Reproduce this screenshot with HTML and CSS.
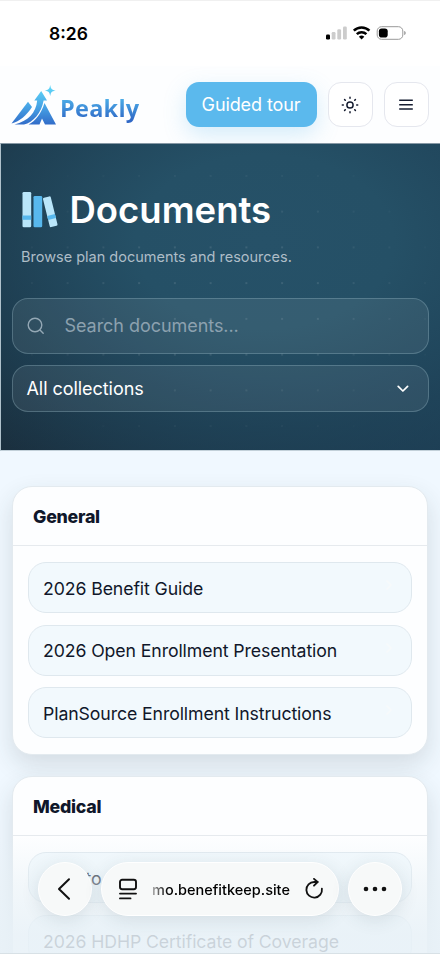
FILE: index.html
```
<!DOCTYPE html>
<html lang="en">
<head>
<meta charset="utf-8">
<meta name="viewport" content="width=device-width, initial-scale=1">
<title>Peakly Documents</title>
<link rel="stylesheet" href="styles.css">
</head>
<body>
<div class="screen">
  <div class="status">
    <span class="time">8:26</span>
    <svg class="status-icons" width="80" height="16" viewBox="0 0 80 16">
      <rect x="0" y="9.5" width="4" height="5" rx="1.2" fill="#000"/>
      <rect x="5.7" y="7" width="3.8" height="7.5" rx="1.2" fill="#ccc"/>
      <rect x="11.3" y="4.2" width="3.8" height="10.3" rx="1.2" fill="#ccc"/>
      <rect x="17" y="1.5" width="3.8" height="13" rx="1.2" fill="#ccc"/>
      <g fill="none" stroke="#000" stroke-width="2.5"><path d="M27.8 5.7a11 11 0 0 1 15.6 0"/><path d="M30.8 9.2a6.8 6.8 0 0 1 9.6 0"/></g>
      <path d="M32.9 11.7a3.9 3.9 0 0 1 5.4 0L35.6 14.5z" fill="#000"/>
      <rect x="51.2" y="1.7" width="25.6" height="12.6" rx="4.3" fill="none" stroke="#999"/>
      <rect x="52.9" y="3.4" width="8.8" height="9.2" rx="2.8" fill="#000"/>
      <path d="M78.2 6c2 .6 2 3.4 0 4z" fill="#999"/>
    </svg>
  </div>

  <header class="topbar">
    <div class="brand">
      <svg width="46" height="42" viewBox="0 0 46 42">
        <defs><linearGradient id="peak" x1="0" y1="0" x2="0" y2="42" gradientUnits="userSpaceOnUse"><stop offset="0" stop-color="#62dcfa"/><stop offset=".5" stop-color="#47a5e6"/><stop offset="1" stop-color="#2f65c5"/></linearGradient></defs>
        <g fill="url(#peak)">
          <path d="M.5 38.5 17 16.8 21 22C15 31 9 36 .5 38.5z"/>
          <path d="M3.5 39.5C17 36 25 28 26.2 15.5H23.3L30.2 6 36 15.5H32.6C30.5 28 22 37.5 13 39.5z"/>
          <path d="M17.5 39.5C24.5 36 30 29 33.5 18L45 39.5H34L31 33.5 28.5 39.5z"/>
          <path d="M39.2 0C39.9 4 40.7 4.8 44.7 5.5 40.7 6.3 39.9 7 39.2 11 38.5 7 37.7 6.3 33.7 5.5 37.7 4.8 38.5 4 39.2 0z"/>
        </g>
      </svg>
      <span class="brand-name">Peakly</span>
    </div>
    <button class="tour">Guided tour</button>
    <button class="square" aria-label="Theme">
      <svg width="20" height="20" viewBox="0 0 20 20" fill="none" stroke="#151c30" stroke-width="1.5" stroke-linecap="round"><circle cx="10" cy="10" r="3.1"/><path d="M10 2.3v1M10 16.7v1M2.3 10h1M16.7 10h1M4.6 4.6l.7.7M14.7 14.7l.7.7M4.6 15.4l.7-.7M14.7 5.3l.7-.7"/></svg>
    </button>
    <button class="square" aria-label="Menu">
      <svg width="20" height="20" viewBox="0 0 20 20" fill="none" stroke="#151c30" stroke-width="1.5"><path d="M3.2 5.3h13.6M3.2 9.7h13.6M3.2 14.1h13.6"/></svg>
    </button>
  </header>

  <section class="hero">
    <div class="title">
      <svg width="37" height="36" viewBox="0 0 37 36">
        <rect x=".5" y="0" width="8.7" height="35.3" rx="1.3" fill="#bae6fa"/><path d="M.5 23.5h8.7v4.3H.5z" fill="#58b8ed"/>
        <rect x="11.5" y="4" width="8.7" height="31.3" rx="1.3" fill="#58b8ed"/>
        <g transform="rotate(-14 20.7 6)"><rect x="20.7" y="6" width="8" height="30.3" rx="1.3" fill="#bae6fa"/><path d="M20.7 24.5h8v4.2h-8z" fill="#58b8ed"/></g>
      </svg>
      <h1>Documents</h1>
    </div>
    <p class="subtitle">Browse plan documents and resources.</p>
    <div class="field search">
      <svg width="18" height="18" viewBox="0 0 18 18" fill="none" stroke="#94a8b5" stroke-width="1.4" stroke-linecap="round"><circle cx="8" cy="8" r="6.8"/><path d="m13 13 3.2 3.2"/></svg>
      <span>Search documents...</span>
    </div>
    <div class="field select">
      <span>All collections</span>
      <svg width="12" height="8" viewBox="0 0 12 8" fill="none" stroke="#fff" stroke-width="1.7" stroke-linecap="round" stroke-linejoin="round"><path d="m1.2 1.3 4.7 4.7 4.7-4.7"/></svg>
    </div>
  </section>

  <main class="content">
    <section class="card">
      <h2>General</h2>
      <div class="list">
        <a class="item"><span>2026 Benefit Guide</span><svg width="8" height="12" viewBox="0 0 8 12"><path d="m1.5 1.5 4.5 4.5-4.5 4.5"/></svg></a>
        <a class="item"><span>2026 Open Enrollment Presentation</span><svg width="8" height="12" viewBox="0 0 8 12"><path d="m1.5 1.5 4.5 4.5-4.5 4.5"/></svg></a>
        <a class="item"><span>PlanSource Enrollment Instructions</span><svg width="8" height="12" viewBox="0 0 8 12"><path d="m1.5 1.5 4.5 4.5-4.5 4.5"/></svg></a>
      </div>
    </section>
    <section class="card">
      <h2>Medical</h2>
      <div class="list">
        <a class="item"><span>How to</span></a>
        <a class="item"><span>2026 HDHP Certificate of Coverage</span></a>
      </div>
    </section>
  </main>

  <div class="fade"></div>
  <nav class="browser">
    <div class="glass round"><svg width="16" height="24" viewBox="0 0 16 24" fill="none" stroke="#111" stroke-width="2" stroke-linecap="round" stroke-linejoin="round"><path d="M12 2.3 2 12l10 9.7"/></svg></div>
    <div class="glass address">
      <svg width="20" height="22" viewBox="0 0 20 22" fill="none" stroke="#111" stroke-width="1.9" stroke-linecap="round"><rect x="2" y="1.7" width="16" height="9.6" rx="2.2"/><path d="M2 15.6h16M2 20.4h10.5"/></svg>
      <span class="url">mo.benefitkeep.site</span>
      <svg width="20" height="22" viewBox="0 0 20 22" fill="none" stroke="#111" stroke-width="1.8" stroke-linecap="round" stroke-linejoin="round"><path d="M17.9 10.7A7.8 7.8 0 1 1 10.2 4h3.4"/><path d="m10 .9 3.6 3.1-3.6 3.7"/></svg>
    </div>
    <div class="glass round"><svg width="24" height="6" viewBox="0 0 24 6" fill="#111"><circle cx="3" cy="3" r="2.3"/><circle cx="12" cy="3" r="2.3"/><circle cx="21" cy="3" r="2.3"/></svg></div>
  </nav>
</div>
</body>
</html>
```
FILE: styles.css
```
* { box-sizing: border-box; }
body { margin: 0; font-family: Inter, "Liberation Sans", sans-serif; color: #10172a; }
svg { display: block; flex: none; }
h1, h2, p { margin: 0; }
button { font: inherit; padding: 0; }
.screen { position: relative; width: 440px; height: 954px; overflow: hidden; background: #f0f8ff; border-top: 1px solid #f0f0f0; display: flex; flex-direction: column; }

.status { height: 65px; flex: none; background: #fff; display: flex; justify-content: space-between; align-items: center; padding: 0 34px 1px 49px; }
.time { font-size: 17.5px; font-weight: 600; color: #000; }

.topbar { height: 77px; flex: none; background: #fdfeff; display: flex; align-items: center; gap: 11px; padding: 0 11.5px 0 11px; }
.brand { flex: 1; display: flex; align-items: center; gap: 3px; padding-top: 2px; }
.brand-name { font: 700 23.5px/36px "Open Sans", sans-serif; padding-top: 4px; background: linear-gradient(#50b6ec 25%, #2f68c6 85%); -webkit-background-clip: text; background-clip: text; color: transparent; letter-spacing: .25px; }
.tour { width: 131px; height: 45px; border: 0; border-radius: 13px; background: #5bb9ed; color: #fff; font-size: 18px; letter-spacing: -.1px; box-shadow: 0 8px 22px rgba(91,185,237,.25); }
.square { width: 45px; height: 45px; display: grid; place-items: center; background: #fff; border: 1px solid #e5e7ee; border-radius: 13px; }

.hero { position: relative; height: 308px; flex: none; border-top: 1px solid #8698a5; border-left: 1px solid #afc1cb; border-bottom: 1px solid #c2d0d9; padding: 46px 11.5px 0 10.5px; background: radial-gradient(ellipse 430px 290px at 60% 32%, #265168 0%, #255066 30%, rgba(33,72,94,.65) 65%, rgba(28,58,77,0) 100%), linear-gradient(90deg, #192c3a, #1c3b51); }
.hero::before { content: ""; position: absolute; inset: 0; background: radial-gradient(circle, rgba(255,255,255,.1) 0 1px, transparent 1.5px) 13px 14px / 35.75px 35.75px; -webkit-mask-image: radial-gradient(ellipse at center, #000 30%, transparent 80%); mask-image: radial-gradient(ellipse at center, #000 30%, transparent 80%); }
.hero > * { position: relative; }
.title { display: flex; align-items: center; gap: 11px; padding-left: 10px; height: 40px; }
h1 { color: #fff; font-size: 36.5px; line-height: 40px; font-weight: 570; letter-spacing: 0; }
.subtitle { margin: 17px 0 0 9.5px; color: #aebdc7; font-size: 14.5px; line-height: 20px; }
.field { display: flex; align-items: center; border: 1px solid rgba(160,192,205,.32); border-radius: 16px; background: rgba(255,255,255,.075); font-size: 18px; }
.search { height: 56px; margin-top: 31px; padding: 0 0 1px 14px; gap: 20px; color: #8ca1af; letter-spacing: -.05px; }
.select { height: 47px; margin-top: 11px; padding: 0 19px 0 14px; justify-content: space-between; color: #fff; letter-spacing: -.05px; }

.content { padding: 35px 12px 0; }
.card { background: #fdfeff; border: 1px solid #e3eaef; border-radius: 20px; overflow: hidden; margin-bottom: 21px; box-shadow: 0 10px 24px rgba(40,60,60,.14); }
h2 { height: 59px; padding: 0 20px; line-height: 59px; border-bottom: 1px solid #e6eaee; font-size: 17.8px; font-weight: 850; letter-spacing: -.25px; }
.list { padding: 16px 15px; display: grid; gap: 11.7px; }
.item { height: 51px; border: 1px solid #dfe8ee; border-radius: 18px; background: #f2f9fd; display: flex; align-items: center; justify-content: space-between; padding: 1px 18px 0 14px; font-size: 17.7px; letter-spacing: -.1px; }
.item svg { fill: none; stroke: #f7fafb; stroke-width: 1.5; margin-top: -6px; }

.fade { position: absolute; left: 0; right: 0; bottom: 0; height: 118px; border-bottom: 1px solid #d8e1e6; background: linear-gradient(rgba(234,243,248,0), rgba(232,241,246,.5) 40%, rgba(232,241,247,.86) 85%); }
.browser { position: absolute; left: 38px; right: 38px; top: 861px; display: flex; gap: 9px; }
.glass { height: 54px; border-radius: 27px; display: flex; align-items: center; justify-content: center; background: #f7f9f9; border: 1px solid #fff; box-shadow: 0 4px 18px rgba(50,75,85,.12); }
.round { width: 54px; flex: none; }
.address { flex: 1; justify-content: space-between; padding: 0 14px 0 16px; }
.url { font-size: 14.5px; font-weight: 500; white-space: nowrap; background: linear-gradient(90deg, #aaa, #000 16px); -webkit-background-clip: text; background-clip: text; color: transparent; }
```
